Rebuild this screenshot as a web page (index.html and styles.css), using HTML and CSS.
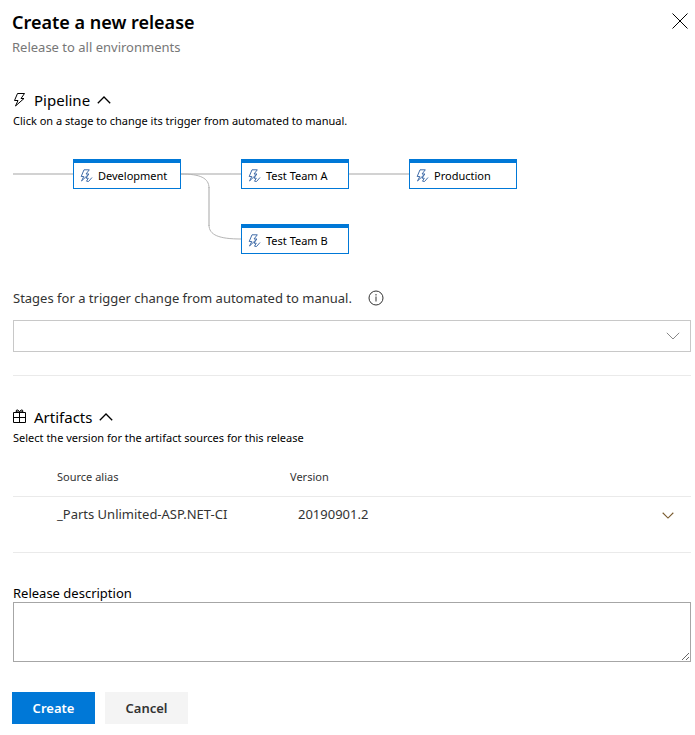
FILE: index.html
```html
<!DOCTYPE html>
<html lang="en">
<head>
<meta charset="utf-8">
<meta name="viewport" content="width=device-width, initial-scale=1">
<title>Create a new release</title>
<link rel="stylesheet" href="styles.css">
</head>
<body>
<svg class="defs" aria-hidden="true">
  <symbol id="bolt" viewBox="0 0 14 16"><path d="M4.500 1.500H11.500L8 6.500H11L2.500 14L5 8.500H1.500Z"/></symbol>
  <symbol id="auto" viewBox="0 0 13 14"><path d="M4 .8H9.300L6 5H8.800L1.500 12L3.800 7.500H1.200ZM8.800 5L6 9.200H8.300L6.500 12.200L8.500 12.500L12 8.500"/></symbol>
  <symbol id="up" viewBox="0 0 14 8"><path d="M.8 7.200L7 1L13.200 7.200"/></symbol>
  <symbol id="down" viewBox="0 0 14 8"><path d="M.8 .8L7 7L13.200 .8"/></symbol>
</svg>
<form class="panel">
  <header class="header">
    <div>
      <h1 class="title">Create a new release</h1>
      <p class="subtitle">Release to all environments</p>
    </div>
    <button class="icon-button close" type="button" aria-label="Close">
      <svg class="icon" width="16" height="16" viewBox="0 0 16 16"><path d="M.5 .5L15.500 15.500M15.500 .5L.5 15.500"/></svg>
    </button>
  </header>

  <section class="section pipeline">
    <h2><button class="heading" type="button" aria-expanded="true">
      <svg class="icon" width="14" height="16"><use href="#bolt"/></svg>
      <span>Pipeline</span>
      <svg class="icon chevron" width="14" height="8"><use href="#up"/></svg>
    </button></h2>
    <p class="hint">Click on a stage to change its trigger from automated to manual.</p>
    <div class="stages">
      <svg class="links" width="504" height="95" viewBox="0 0 504 95" aria-hidden="true">
        <path class="line" d="M0 15H60M168 15H228M336 15H396M196 28V67"/>
        <path class="curve" d="M168 15C187 15 196 19 196 29M196 66C196 76 206 80 228 80"/>
      </svg>
      <button class="stage development" type="button"><svg class="icon" width="13" height="14"><use href="#auto"/></svg>Development</button>
      <button class="stage team-a" type="button"><svg class="icon" width="13" height="14"><use href="#auto"/></svg>Test Team A</button>
      <button class="stage production" type="button"><svg class="icon" width="13" height="14"><use href="#auto"/></svg>Production</button>
      <button class="stage team-b" type="button"><svg class="icon" width="13" height="14"><use href="#auto"/></svg>Test Team B</button>
    </div>
    <div class="label-row">
      <label for="manual-stages">Stages for a trigger change from automated to manual.</label>
      <svg class="icon" width="16" height="16" viewBox="0 0 16 16" role="img" aria-label="Information"><circle cx="8" cy="8" r="7"/><path d="M8 6.500V11.500M8 4V5.500"/></svg>
    </div>
    <div class="select-box">
      <select id="manual-stages"><option></option></select>
      <svg class="icon" width="14" height="8"><use href="#down"/></svg>
    </div>
  </section>

  <section class="section artifacts">
    <h2><button class="heading" type="button" aria-expanded="true">
      <svg class="icon" width="14" height="16" viewBox="0 0 14 16"><path d="M.5 3.500H12.500V13.500H.5ZM.5 8.500H12.500M6.500 3.500V13.500M6.500 3.500L3 2.500Q3 .5 5 1L6.500 3L8 1Q10 .5 10 2.500L6.500 3.500"/></svg>
      <span>Artifacts</span>
      <svg class="icon chevron" width="14" height="8"><use href="#up"/></svg>
    </button></h2>
    <p class="hint">Select the version for the artifact sources for this release</p>
    <table class="sources">
      <thead><tr><th class="alias">Source alias</th><th>Version</th><td class="action"></td></tr></thead>
      <tbody><tr><td class="alias">_Parts Unlimited-ASP.NET-CI</td><td class="version">20190901.2</td><td class="action"><button class="icon-button" type="button" aria-label="Choose version"><svg class="icon chevron" width="12" height="7"><use href="#down"/></svg></button></td></tr></tbody>
    </table>
  </section>

  <div class="description">
    <label for="description">Release description</label>
    <textarea id="description"></textarea>
  </div>

  <footer class="actions">
    <button class="button primary" type="submit">Create</button>
    <button class="button" type="button">Cancel</button>
  </footer>
</form>
</body>
</html>
```
FILE: styles.css
```css
* { box-sizing: border-box; }

body {
  margin: 0;
  background: #fff;
  color: #000;
  font: 13px/20px "Segoe UI", "Noto Sans", sans-serif;
}

h1, h2, p { margin: 0; font-weight: 400; }

button {
  font: inherit;
  color: inherit;
  cursor: pointer;
}

.defs { display: none; }

.icon {
  display: block;
  flex: none;
  fill: none;
  stroke: currentColor;
}

.chevron { stroke-width: 1.3; }

.panel { padding: 8px 4px 11px 12px; }

.header {
  display: flex;
  justify-content: space-between;
  align-items: flex-start;
}

.title {
  font-size: 18px;
  line-height: 29px;
  font-weight: 600;
}

.subtitle {
  line-height: 20px;
  color: #777;
}

.icon-button {
  padding: 0;
  border: 0;
  background: none;
}

.close { margin: 5px 3px 0 0; }

.section {
  margin-left: 1px;
  border-bottom: 1px solid #eaeaea;
}

.pipeline { padding: 31px 0 23px; }

.artifacts { padding: 29px 0 20px; }

.heading {
  display: flex;
  align-items: center;
  gap: 7px;
  padding: 0;
  border: 0;
  background: none;
  font-size: 15px;
  line-height: 24px;
}

.hint {
  font-size: 11px;
  line-height: 18px;
}

.stages {
  position: relative;
  display: grid;
  grid-template-columns: repeat(3, 108px);
  grid-template-rows: repeat(2, 30px);
  gap: 35px 60px;
  margin-top: 29px;
  padding-left: 60px;
}

.links {
  position: absolute;
  top: 0;
  left: 0;
  fill: none;
}

.line { stroke: #d2d2d2; stroke-width: 2; }

.curve { stroke: #b5b5b5; }

.stage {
  position: relative;
  display: flex;
  align-items: center;
  gap: 5px;
  padding: 0 6px;
  border: 1px solid #0078d7;
  border-top-width: 4px;
  background: #fff;
  font-size: 11px;
  white-space: nowrap;
}

.stage .icon { color: #426da9; }

.team-b { grid-area: 2 / 2; }

.label-row {
  display: flex;
  align-items: center;
  gap: 16px;
  margin-top: 34px;
  color: #333;
}

.select-box {
  display: grid;
  align-items: center;
  margin-top: 12px;
}

.select-box select {
  grid-area: 1 / 1;
  width: 100%;
  height: 32px;
  padding: 0 32px 0 8px;
  border: 1px solid #c8c8c8;
  border-radius: 0;
  background: #fff;
  font: inherit;
  appearance: none;
}

.select-box .icon {
  grid-area: 1 / 1;
  justify-self: end;
  margin-right: 11px;
  color: #888;
  pointer-events: none;
}

.sources {
  width: 100%;
  margin-top: 12px;
  border-collapse: collapse;
  color: #333;
  text-align: left;
}

.sources th, .sources td { padding: 0; }

.sources th {
  height: 37px;
  font-size: 11px;
  font-weight: 400;
}

.sources thead { border-bottom: 1px solid #eaeaea; }

.sources tbody td { height: 36px; }

.sources .alias {
  width: 277px;
  padding-left: 44px;
}

.sources .version { padding-left: 8px; }

.sources .action {
  width: 29px;
  color: #7a5c30;
}

.description {
  display: flex;
  flex-direction: column;
  margin-left: 1px;
  padding-top: 31px;
}

.description label { line-height: 18px; }

.description textarea {
  height: 60px;
  padding: 8px;
  border: 1px solid #a6a6a6;
  border-radius: 0;
  font: inherit;
  resize: vertical;
}

.actions {
  display: flex;
  gap: 10px;
  margin-top: 30px;
}

.button {
  min-width: 83px;
  height: 32px;
  padding: 0 20px;
  border: 0;
  background: #f4f4f4;
  color: #333;
  font-weight: 600;
}

.primary {
  background: #0078d7;
  color: #fff;
}
```
